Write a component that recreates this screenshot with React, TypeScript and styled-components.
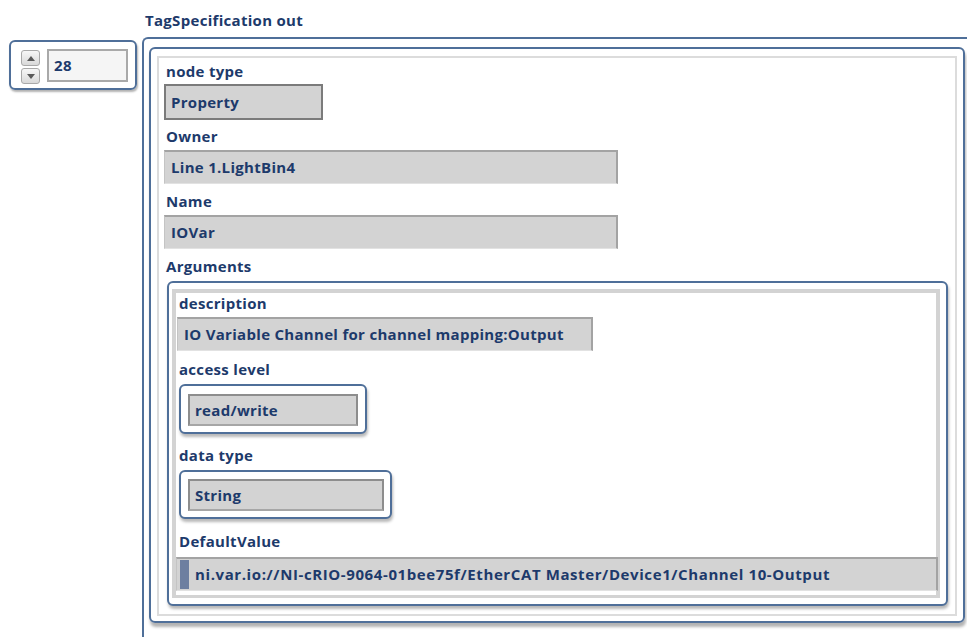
import React from "react";
import styled, { createGlobalStyle } from "styled-components";

const Global = createGlobalStyle`
  html, body {
    margin: 0;
    padding: 0;
    background: #ffffff;
    overflow: hidden;
  }
  body {
    font-family: "Open Sans", "Liberation Sans", sans-serif;
    font-weight: 700;
    font-size: 15px;
    letter-spacing: 0.3px;
    color: #1d3a6b;
  }
`;

const FRAME = "#4f6f99";
const FILL = "#d3d3d3";

const Page = styled.div`
  display: flex;
  align-items: flex-start;
  width: 967px;
  height: 637px;
  overflow: hidden;
`;

const IndexColumn = styled.div`
  padding: 40px 0 0 9px;
`;

const IndexFrame = styled.div`
  box-sizing: border-box;
  width: 128px;
  height: 50px;
  border: 2px solid ${FRAME};
  border-radius: 6px;
  box-shadow: 1px 2px 2px rgba(0, 0, 0, 0.3);
  display: flex;
  align-items: flex-start;
  padding: 7px 0 0 10px;
`;

const Spinner = styled.div`
  display: flex;
  flex-direction: column;
  gap: 2px;
  padding-top: 1px;
`;

const SpinButton = styled.div`
  box-sizing: border-box;
  width: 19px;
  height: 16px;
  border: 1px solid #a9a9a9;
  border-radius: 3px;
  background: linear-gradient(#f7f7f7, #d9d9d9);
  display: flex;
  align-items: center;
  justify-content: center;
`;

const IndexBox = styled.div`
  box-sizing: border-box;
  margin-left: 7px;
  width: 81px;
  height: 33px;
  border: 2px solid #a9a9a9;
  background: #f5f5f5;
  padding-left: 5px;
  line-height: 29px;
`;

const ArrayColumn = styled.div`
  margin-left: 5px;
  display: flex;
  flex-direction: column;
`;

const Caption = styled.div`
  height: 37px;
  box-sizing: border-box;
  padding: 9px 0 0 3px;
  line-height: 22px;
`;

const ArrayFrame = styled.div`
  box-sizing: border-box;
  width: 850px;
  height: 640px;
  border: 2px solid ${FRAME};
  border-right: none;
  border-bottom: none;
  border-top-left-radius: 6px;
  padding: 8px 0 0 5px;
`;

const ClusterFrame = styled.div`
  box-sizing: border-box;
  width: 816px;
  height: 576px;
  border: 2px solid ${FRAME};
  border-radius: 6px;
  box-shadow: 1px 4px 3px rgba(0, 0, 0, 0.3);
  padding: 7px 6px 5px 6px;
`;

const Panel = styled.div`
  box-sizing: border-box;
  height: 100%;
  border: 2px solid #dcdcdc;
  background: #ffffff;
  padding: 3px 5px 0 5px;
  display: flex;
  flex-direction: column;
  align-items: flex-start;
`;

const Label = styled.div<{ $top?: number; $left?: number }>`
  height: 21px;
  line-height: 21px;
  margin-top: ${(p) => p.$top ?? 0}px;
  margin-left: ${(p) => p.$left ?? 2}px;
  white-space: nowrap;
`;

const ControlBox = styled.div<{ $w: number; $top?: number }>`
  box-sizing: border-box;
  width: ${(p) => p.$w}px;
  height: 36px;
  margin-top: ${(p) => p.$top ?? 0}px;
  border: 2px solid #7b7b7b;
  background: ${FILL};
  padding-left: 5px;
  line-height: 32px;
  white-space: nowrap;
`;

const Indicator = styled.div<{ $w: number; $top?: number; $left?: number }>`
  box-sizing: border-box;
  width: ${(p) => p.$w}px;
  height: 34px;
  margin-top: ${(p) => p.$top ?? 0}px;
  margin-left: ${(p) => p.$left ?? 0}px;
  border-top: 2px solid #a3a3a3;
  border-right: 2px solid #a3a3a3;
  border-left: 1px solid #c4c4c4;
  border-bottom: 1px solid #e2e2e2;
  background: ${FILL};
  padding-left: 6px;
  line-height: 31px;
  white-space: nowrap;
  display: flex;
  align-items: center;
`;

const PathText = styled.span`
  letter-spacing: 0.6px;
`;

const SubFrame = styled.div<{ $w: number; $h: number; $top?: number; $left?: number; $pad: string }>`
  box-sizing: border-box;
  width: ${(p) => p.$w}px;
  height: ${(p) => p.$h}px;
  margin-top: ${(p) => p.$top ?? 0}px;
  margin-left: ${(p) => p.$left ?? 0}px;
  border: 2px solid ${FRAME};
  border-radius: 6px;
  box-shadow: 1px 3px 3px rgba(0, 0, 0, 0.28);
  padding: ${(p) => p.$pad};
  background: #ffffff;
`;

const ArgsPanel = styled.div`
  box-sizing: border-box;
  height: 100%;
  width: 768px;
  border: 4px solid #d3d3d3;
  border-bottom-width: 3px;
  background: #ffffff;
  display: flex;
  flex-direction: column;
  align-items: flex-start;
`;

const RingBox = styled.div`
  box-sizing: border-box;
  height: 32px;
  border: 2px solid #8d8d8d;
  border-bottom-color: #a6a6a6;
  background: ${FILL};
  padding-left: 5px;
  line-height: 28px;
  white-space: nowrap;
`;

const Selection = styled.span`
  display: inline-block;
  width: 9px;
  height: 29px;
  margin: 0 6px 0 -3px;
  background: #6d7fa0;
  flex: none;
`;

const Arrow = ({ up }: { up?: boolean }) => (
  <svg width="8" height="5" viewBox="0 0 8 5">
    <polygon points={up ? "0,5 8,5 4,0" : "0,0 8,0 4,5"} fill="#5a5a5a" />
  </svg>
);

export default function App() {
  return (
    <>
      <Global />
      <Page>
        <IndexColumn>
          <IndexFrame>
            <Spinner>
              <SpinButton>
                <Arrow up />
              </SpinButton>
              <SpinButton>
                <Arrow />
              </SpinButton>
            </Spinner>
            <IndexBox>28</IndexBox>
          </IndexFrame>
        </IndexColumn>

        <ArrayColumn>
          <Caption>TagSpecification out</Caption>
          <ArrayFrame>
            <ClusterFrame>
              <Panel>
                <Label>node type</Label>
                <ControlBox $w={159} $top={2}>
                  Property
                </ControlBox>

                <Label $top={6}>Owner</Label>
                <Indicator $w={454} $top={3}>
                  Line 1.LightBin4
                </Indicator>

                <Label $top={7}>Name</Label>
                <Indicator $w={454} $top={3}>
                  IOVar
                </Indicator>

                <Label $top={7}>Arguments</Label>
                <SubFrame $w={781} $h={325} $top={4} $left={3} $pad="6px 6px 6px 3px">
                  <ArgsPanel>
                    <Label $left={3}>description</Label>
                    <Indicator $w={416} $top={3} $left={1}>
                      IO Variable Channel for channel mapping:Output
                    </Indicator>

                    <Label $top={8} $left={3}>access level</Label>
                    <SubFrame $w={188} $h={50} $top={4} $left={3} $pad="8px 7px 0 7px">
                      <RingBox>read/write</RingBox>
                    </SubFrame>

                    <Label $top={11} $left={3}>data type</Label>
                    <SubFrame $w={213} $h={49} $top={4} $left={3} $pad="7px 6px 0 7px">
                      <RingBox>String</RingBox>
                    </SubFrame>

                    <Label $top={12} $left={3}>DefaultValue</Label>
                    <Indicator $w={762} $top={5}>
                      <Selection />
                      <PathText>
                        ni.var.io://NI-cRIO-9064-01bee75f/EtherCAT Master/Device1/Channel 10-Output
                      </PathText>
                    </Indicator>
                  </ArgsPanel>
                </SubFrame>
              </Panel>
            </ClusterFrame>
          </ArrayFrame>
        </ArrayColumn>
      </Page>
    </>
  );
}
